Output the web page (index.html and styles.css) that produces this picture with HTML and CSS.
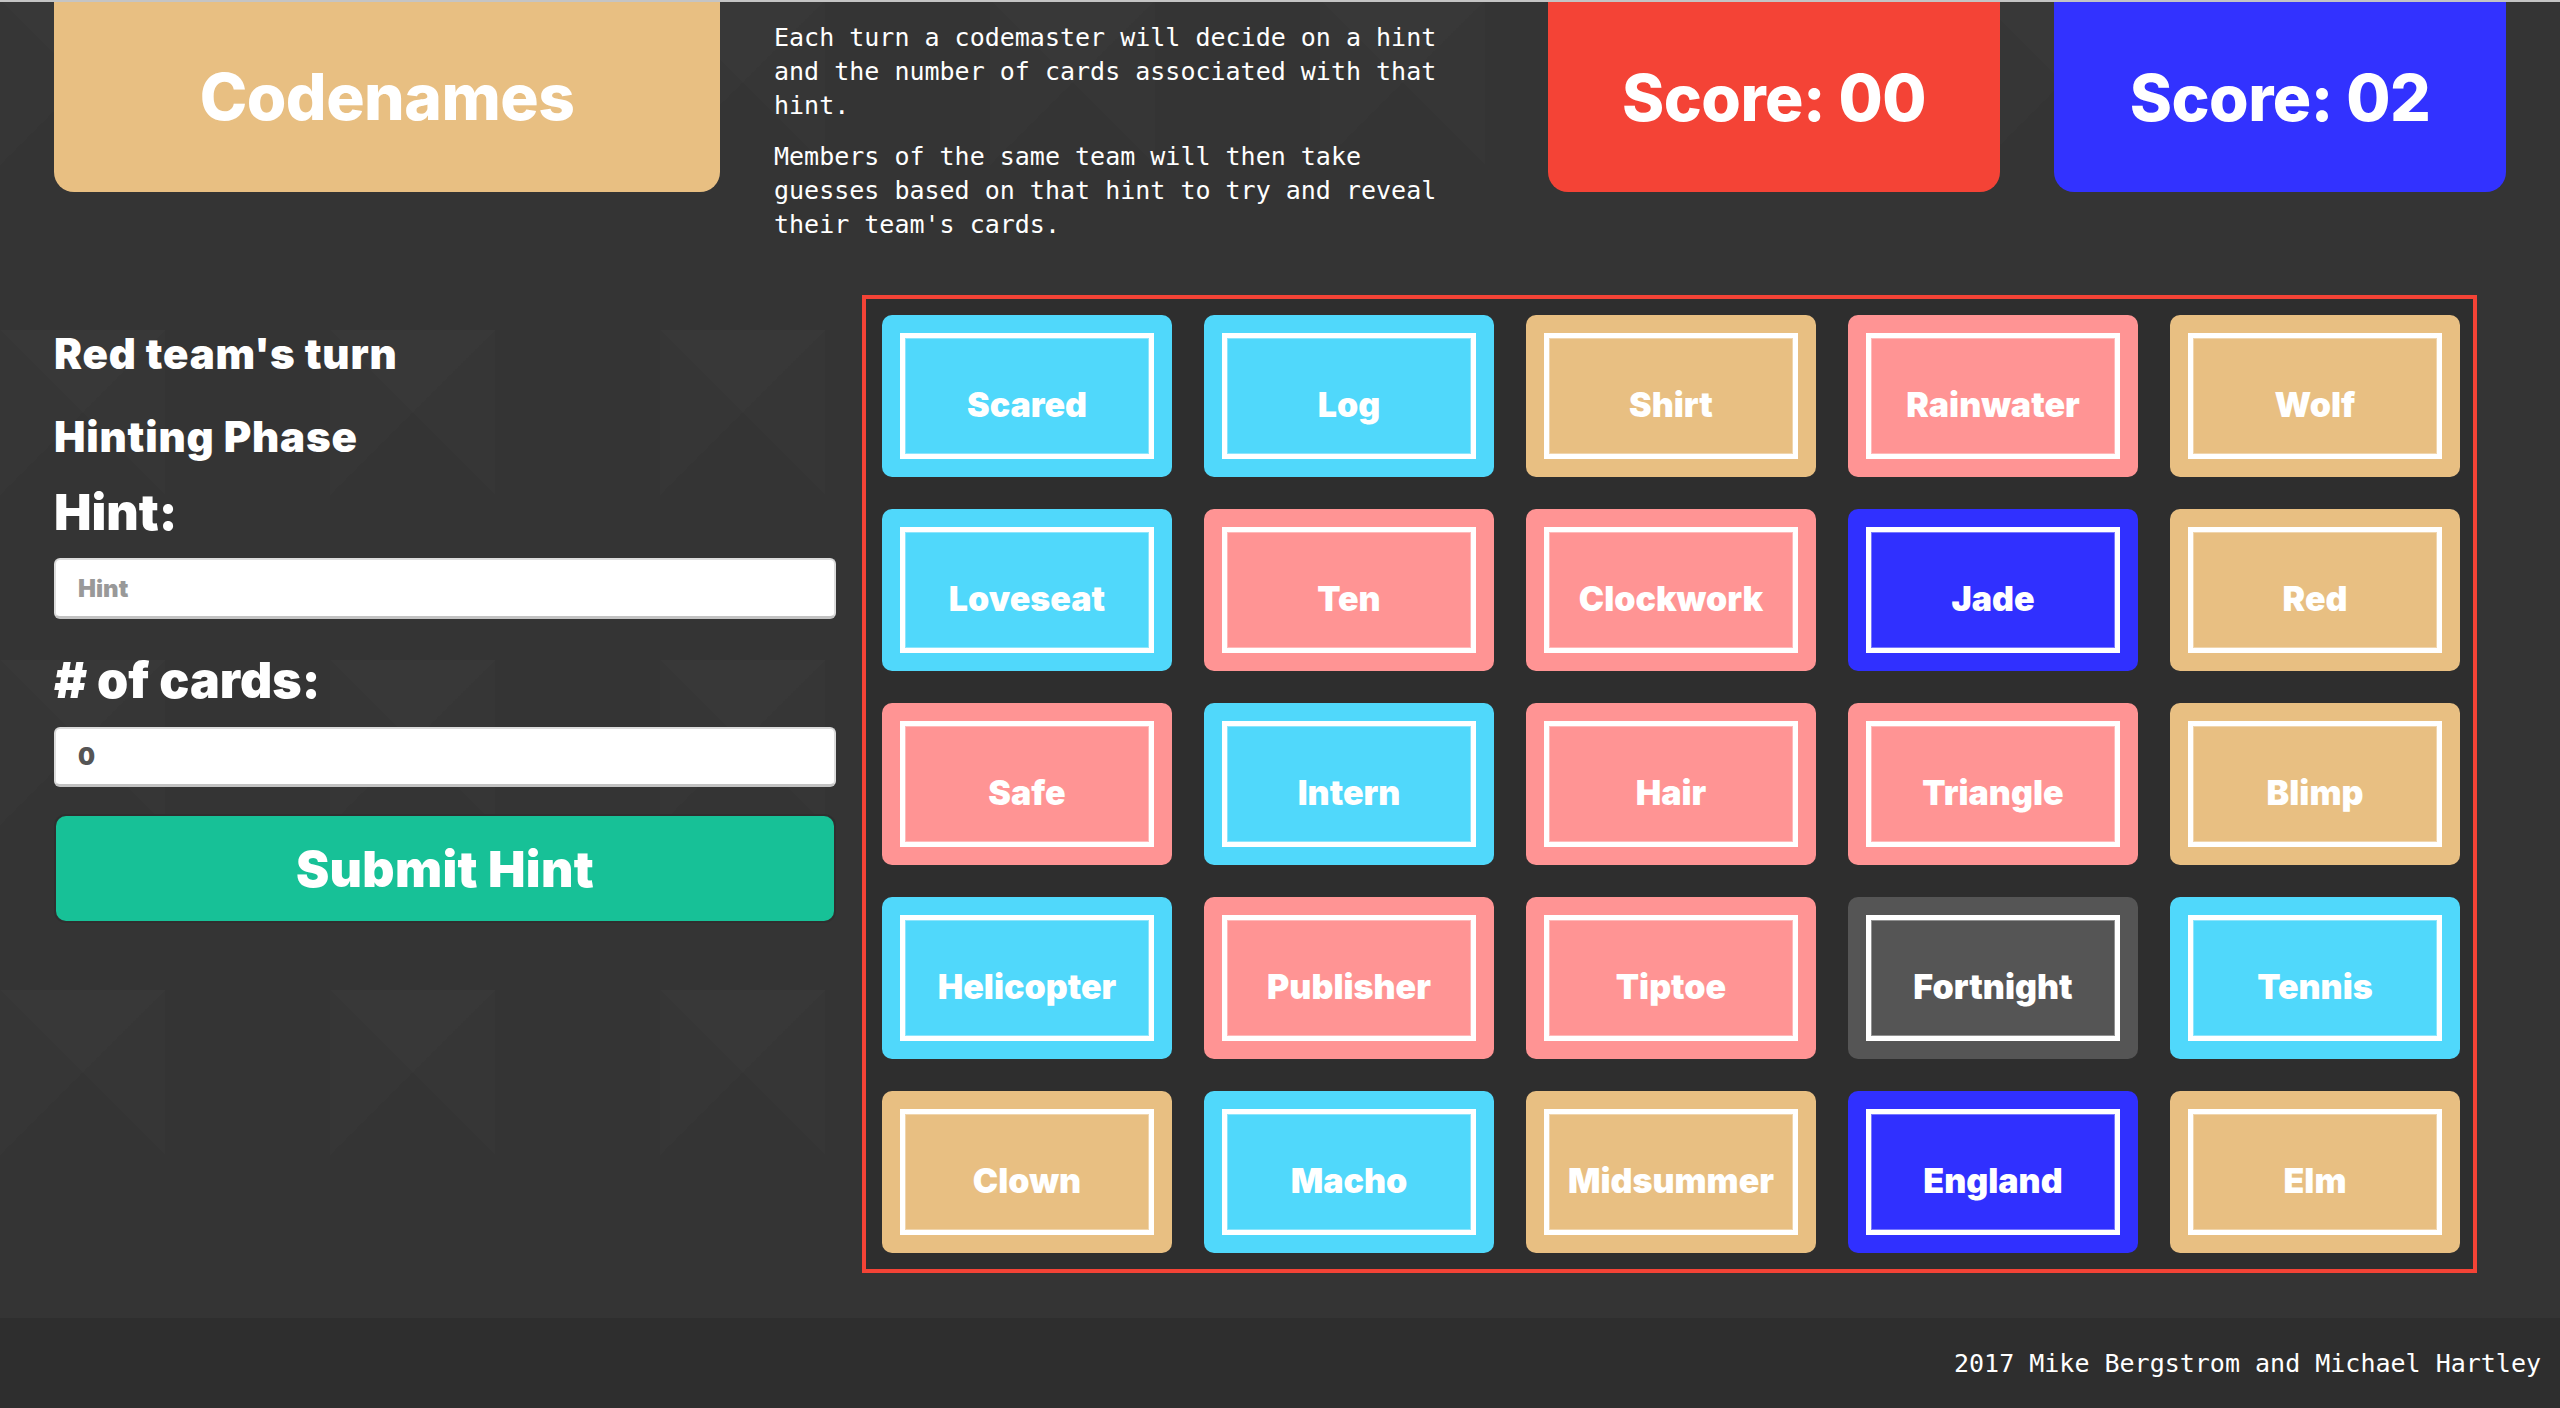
FILE: index.html
```html
<!DOCTYPE html>
<html lang="en">
<head>
<meta charset="utf-8">
<title>Codenames</title>
<link rel="stylesheet" href="styles.css">
</head>
<body>
<header class="top">
  <div class="title-box"><h1 class="title">Codenames</h1></div>
  <div class="rules">
    <p>Each turn a codemaster will decide on a hint and the number of cards associated with that hint.</p>
    <p>Members of the same team will then take guesses based on that hint to try and reveal their team's cards.</p>
  </div>
  <div class="score score-red">Score: 00</div>
  <div class="score score-blue">Score: 02</div>
</header>
<main class="game">
  <section class="panel">
    <h2 class="turn">Red team's turn</h2>
    <h2 class="phase">Hinting Phase</h2>
    <label class="field-label" for="hint">Hint:</label>
    <input class="field" id="hint" type="text" placeholder="Hint">
    <label class="field-label field-label-cards" for="num">&#35; of cards:</label>
    <input class="field" id="num" type="text" value="0">
    <button class="submit" type="button">Submit Hint</button>
  </section>
  <section class="board">
    <div class="card c-blue"><div class="word">Scared</div></div>
    <div class="card c-blue"><div class="word">Log</div></div>
    <div class="card c-tan"><div class="word">Shirt</div></div>
    <div class="card c-pink"><div class="word">Rainwater</div></div>
    <div class="card c-tan"><div class="word">Wolf</div></div>

    <div class="card c-blue"><div class="word">Loveseat</div></div>
    <div class="card c-pink"><div class="word">Ten</div></div>
    <div class="card c-pink"><div class="word">Clockwork</div></div>
    <div class="card c-navy"><div class="word">Jade</div></div>
    <div class="card c-tan"><div class="word">Red</div></div>

    <div class="card c-pink"><div class="word">Safe</div></div>
    <div class="card c-blue"><div class="word">Intern</div></div>
    <div class="card c-pink"><div class="word">Hair</div></div>
    <div class="card c-pink"><div class="word">Triangle</div></div>
    <div class="card c-tan"><div class="word">Blimp</div></div>

    <div class="card c-blue"><div class="word">Helicopter</div></div>
    <div class="card c-pink"><div class="word">Publisher</div></div>
    <div class="card c-pink"><div class="word">Tiptoe</div></div>
    <div class="card c-gray"><div class="word">Fortnight</div></div>
    <div class="card c-blue"><div class="word">Tennis</div></div>

    <div class="card c-tan"><div class="word">Clown</div></div>
    <div class="card c-blue"><div class="word">Macho</div></div>
    <div class="card c-tan"><div class="word">Midsummer</div></div>
    <div class="card c-navy"><div class="word">England</div></div>
    <div class="card c-tan"><div class="word">Elm</div></div>
  </section>
</main>
<footer class="foot">2017 Mike Bergstrom and Michael Hartley</footer>
</body>
</html>
```

FILE: styles.css
```css
html, body {
  margin: 0;
  padding: 0;
}

body {
  min-height: 1406px;
  border-top: 2px solid #c4c4c4;
  background-color: #343434;
  background-image:
    linear-gradient(135deg, rgba(255,255,255,0.008) 25%, transparent 25%),
    linear-gradient(225deg, rgba(255,255,255,0.006) 25%, transparent 25%);
  background-size: 330px 330px, 330px 330px;
  background-position: 0 0, 165px 0;
  color: #fff;
  font-family: "Inter", "Roboto", "Liberation Sans", sans-serif;
  display: flex;
  flex-direction: column;
}

.top {
  display: flex;
  align-items: flex-start;
  gap: 54px;
  padding: 0 54px;
  height: 190px;
}

.title-box,
.score {
  height: 190px;
  border-radius: 0 0 20px 20px;
  display: flex;
  align-items: center;
  justify-content: center;
  flex: none;
}

.title-box {
  width: 666px;
  background: #e8bf82;
}

.title {
  margin: 0;
  font-size: 64px;
  font-weight: 800;
  letter-spacing: -0.5px;
  line-height: 1;
}

.rules {
  width: 720px;
  flex: none;
  font-family: "DejaVu Sans Mono", "Liberation Mono", monospace;
  font-size: 25px;
  line-height: 34px;
}

.rules p {
  width: 680px;
  margin: 19px 0 0;
}

.rules p + p {
  margin-top: 17px;
}

.score {
  width: 452px;
  font-size: 64px;
  font-weight: 800;
  letter-spacing: -0.5px;
}

.score-red { background: #f44336; }
.score-blue { background: #3232ff; }

.game {
  flex: 1;
  display: flex;
  align-items: flex-start;
  padding: 103px 54px 0;
}

.panel {
  width: 782px;
  flex: none;
  display: flex;
  flex-direction: column;
  padding-top: 34px;
}

.turn,
.phase {
  margin: 0;
  font-size: 42px;
  line-height: 50px;
  font-weight: 900;
  letter-spacing: 0.8px;
}

.phase {
  margin-top: 33px;
}

.field-label {
  margin-top: 20px;
  font-size: 50px;
  line-height: 60px;
  font-weight: 900;
  letter-spacing: 0;
}

.field-label-cards {
  margin-top: 31px;
}

.field {
  box-sizing: border-box;
  margin-top: 16px;
  width: 782px;
  height: 61px;
  border: 2px solid #dcdcdc;
  border-bottom: 3px solid #c2c2c2;
  border-radius: 6px;
  background: #fff;
  padding: 0 22px;
  font-family: "Inter", "Roboto", sans-serif;
  font-weight: 900;
  font-size: 24px;
  color: #555;
  outline: none;
}

.field::placeholder {
  color: #999;
}

#num {
  margin-top: 17px;
  height: 60px;
}

.submit {
  margin: 29px 0 0 2px;
  width: 778px;
  height: 105px;
  border: none;
  border-radius: 10px;
  background: #17c197;
  box-shadow: 0 0 0 2px #2f2f2f;
  color: #fff;
  font-family: "Inter", "Roboto", sans-serif;
  font-size: 50px;
  font-weight: 900;
  letter-spacing: 0.3px;
  cursor: pointer;
}

.board {
  margin-left: 26px;
  display: grid;
  grid-template-columns: repeat(5, 290px);
  grid-auto-rows: 162px;
  gap: 32px;
  padding: 16px 13px 16px 16px;
  border: 4px solid #f44336;
  background: #2e2e2e;
}

.card {
  border-radius: 10px;
  padding: 18px;
  box-sizing: border-box;
  display: flex;
}

.word {
  flex: 1;
  border: 5px solid #fff;
  box-shadow: inset 0 0 0 1px rgba(255,255,255,0.35);
  display: flex;
  align-items: center;
  justify-content: center;
  padding-top: 16px;
  box-sizing: border-box;
  font-size: 34px;
  font-weight: 900;
  letter-spacing: 0;
  color: #fff;
}

.c-blue { background: #50d8fb; }
.c-pink { background: #ff9494; }
.c-tan { background: #e8bf82; }
.c-navy { background: #3030ff; }
.c-gray { background: #555555; }

.foot {
  height: 90px;
  flex: none;
  background: #2e2e2e;
  display: flex;
  align-items: center;
  justify-content: flex-end;
  padding: 0 19px;
  font-family: "DejaVu Sans Mono", "Liberation Mono", monospace;
  font-size: 25px;
}
```
